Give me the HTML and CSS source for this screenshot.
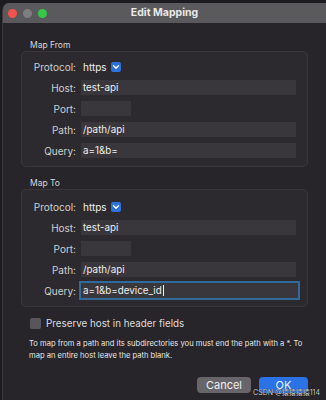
FILE: index.html
```html
<!DOCTYPE html>
<html>
<head>
<meta charset="utf-8">
<link rel="stylesheet" href="styles.css">
</head>
<body>
<div class="window">
  <div class="titlebar">
    <div class="lights">
      <span class="light red"></span>
      <span class="light gray"></span>
      <span class="light green"></span>
    </div>
    <div class="title">Edit Mapping</div>
  </div>
  <div class="content">
    <div class="group-label">Map From</div>
    <div class="group">
      <div class="row"><span class="label">Protocol:</span><span class="popup">https<span class="chev"><svg width="8" height="6" viewBox="0 0 8 6"><path d="M1.5 1.8 L4 4.3 L6.5 1.8" fill="none" stroke="#fff" stroke-width="1.4" stroke-linecap="round" stroke-linejoin="round"/></svg></span></span></div>
      <div class="row"><span class="label">Host:</span><span class="field">test-api</span></div>
      <div class="row"><span class="label">Port:</span><span class="field port"></span></div>
      <div class="row"><span class="label">Path:</span><span class="field">/path/api</span></div>
      <div class="row"><span class="label">Query:</span><span class="field">a=1&amp;b=</span></div>
    </div>
    <div class="group-label second">Map To</div>
    <div class="group g2">
      <div class="row"><span class="label">Protocol:</span><span class="popup">https<span class="chev"><svg width="8" height="6" viewBox="0 0 8 6"><path d="M1.5 1.8 L4 4.3 L6.5 1.8" fill="none" stroke="#fff" stroke-width="1.4" stroke-linecap="round" stroke-linejoin="round"/></svg></span></span></div>
      <div class="row"><span class="label">Host:</span><span class="field">test-api</span></div>
      <div class="row"><span class="label">Port:</span><span class="field port"></span></div>
      <div class="row"><span class="label">Path:</span><span class="field">/path/api</span></div>
      <div class="row"><span class="label">Query:</span><span class="field focus">a=1&amp;b=device_id<span class="caret"></span></span></div>
    </div>
    <div class="check-row"><span class="checkbox"></span><span class="check-label">Preserve host in header fields</span></div>
    <p class="help">To map from a path and its subdirectories you must end the path with a *. To map an entire host leave the path blank.</p>
    <div class="buttons">
      <span class="btn cancel">Cancel</span>
      <span class="btn ok">OK</span>
    </div>
  </div>
  <div class="watermark">CSDN @猿猿猿猿114</div>
</div>
</body>
</html>
```
FILE: styles.css
```css
html, body {
  margin: 0;
  padding: 0;
  background: #1c1b1f;
  height: 400px;
  overflow: hidden;
}
body {
  font-family: Inter, "Noto Sans", "Noto Sans CJK SC", sans-serif;
  color: #dcdcdc;
}
.window {
  position: relative;
  margin: 3px 0 0 2px;
  height: 397px;
  background: #272529;
  border-left: 1px solid #3c3a3e;
  border-radius: 7px 0 0 0;
  overflow: hidden;
}
.titlebar {
  height: 20px;
  background: #5a595b;
  display: flex;
  align-items: center;
  position: relative;
}
.lights {
  display: flex;
  gap: 6px;
  padding-left: 5px;
}
.light {
  width: 9px;
  height: 9px;
  border-radius: 50%;
  display: block;
}
.red { background: #f0544c; }
.gray { background: #7e7d80; }
.green { background: #35c748; }
.title {
  position: absolute;
  left: 0;
  right: 0;
  text-align: center;
  font-weight: 700;
  font-size: 10.5px;
  color: #e8e8e8;
  top: 3px;
}
.content {
  padding: 0 18px 0 18px;
}
.group-label {
  font-size: 8.5px;
  line-height: 12px;
  padding-left: 9px;
  margin-top: 16px;
  color: #d8d8d8;
}
.group-label.second {
  margin-top: 10px;
}
.group {
  background: #2c2a2e;
  border: 1px solid #39373b;
  border-radius: 5px;
  padding: 7px 11px 8px 0;
  display: flex;
  flex-direction: column;
  gap: 6px;
}
.group.g2 {
  padding-top: 9px;
}
.row {
  display: flex;
  align-items: center;
  height: 15px;
}
.label {
  width: 54px;
  text-align: right;
  font-size: 10px;
  color: #cfcfcf;
  margin-right: 5px;
}
.field {
  flex: 1;
  height: 15px;
  background: #39373b;
  font-size: 9.8px;
  line-height: 15px;
  padding-left: 2px;
  color: #eeeeee;
  box-sizing: border-box;
  display: flex;
  align-items: center;
}
.field.port {
  flex: none;
  width: 50px;
}
.field.focus {
  outline: 2px solid #2f6a9a;
  outline-offset: 0;
  margin-right: -2px;
}
.caret {
  display: inline-block;
  width: 1px;
  height: 11px;
  background: #eee;
  margin-left: 1px;
}
.popup {
  font-size: 10px;
  color: #eee;
  display: flex;
  align-items: center;
  gap: 4px;
  padding-left: 2px;
}
.chev {
  width: 10px;
  height: 10px;
  background: #2b72de;
  border-radius: 2px;
  display: flex;
  align-items: center;
  justify-content: center;
}
.chev svg { display: block; }
.check-row {
  display: flex;
  align-items: center;
  margin-top: 11px;
  padding-left: 9px;
  gap: 5px;
}
.checkbox {
  width: 11px;
  height: 11px;
  border-radius: 2px;
  background: #58565a;
  display: block;
}
.check-label {
  font-size: 9.8px;
  color: #dedede;
}
.help {
  margin: 9px 0 0 8px;
  font-size: 7.6px;
  line-height: 12px;
  color: #e6e6e6;
  width: 274px;
}
.buttons {
  display: flex;
  justify-content: flex-end;
  gap: 8px;
  margin-top: 15px;
  padding-right: 0;
}
.btn {
  height: 16px;
  border-radius: 4px;
  font-size: 11px;
  line-height: 16px;
  text-align: center;
  color: #f0f0f0;
}
.cancel {
  width: 54px;
  background: #676569;
}
.ok {
  width: 49px;
  background: #2a72e6;
}
.watermark {
  position: absolute;
  right: 6px;
  top: 384px;
  font-size: 7px;
  color: #cfcfcf;
  text-shadow: 0 0 1px #000;
}
```
